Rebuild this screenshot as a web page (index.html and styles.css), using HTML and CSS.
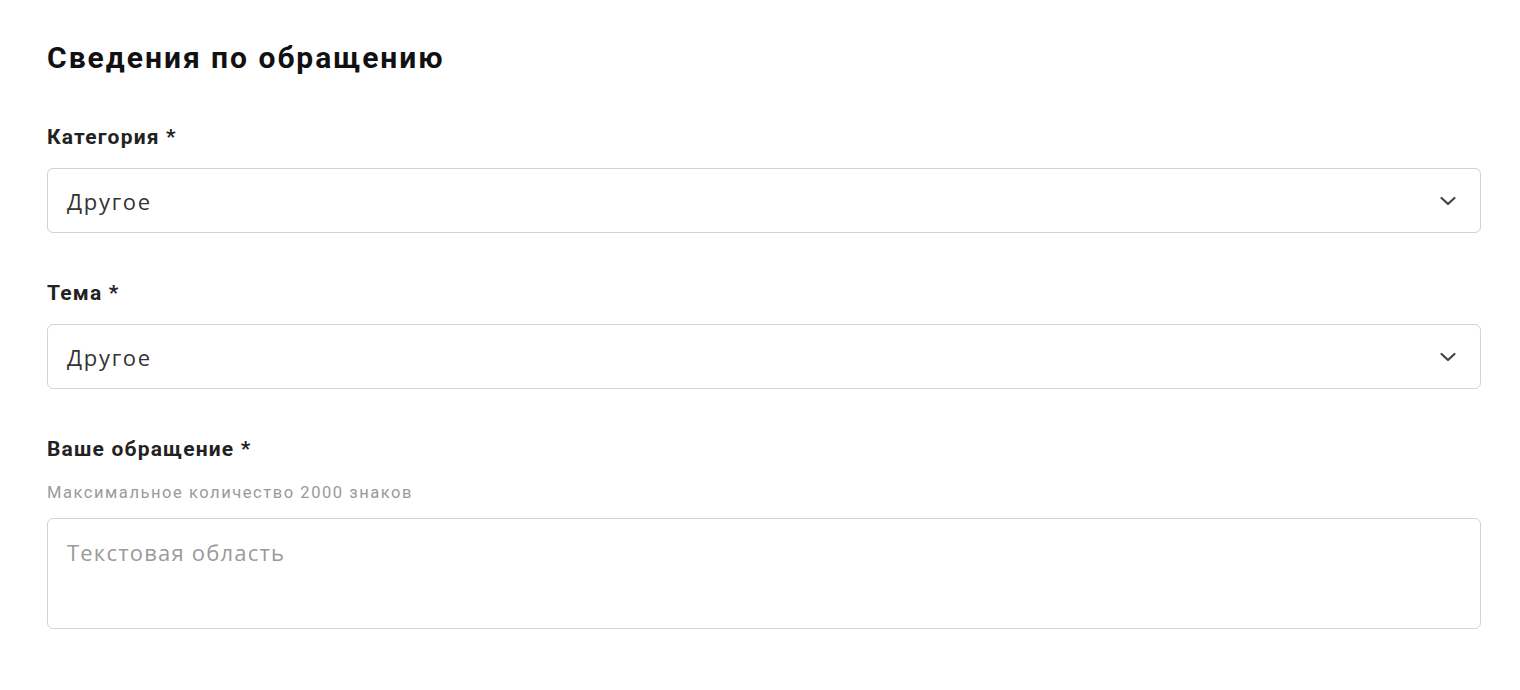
FILE: index.html
```html
<!DOCTYPE html>
<html lang="ru">
<head>
    <meta charset="UTF-8">
    <title>Сведения по обращению</title>
    <link rel="stylesheet" href="styles.css">
</head>
<body>
    <form class="request-form">
        <h2 class="form-title">Сведения по обращению</h2>

        <div class="field">
            <label class="field-label">Категория *</label>
            <div class="select">
                <span class="select-value">Другое</span>
                <svg class="chevron" width="20" height="20" viewBox="0 0 20 20"><path d="M3.5 7l6.5 6 6.5-6" fill="none" stroke="#444" stroke-width="2.2" stroke-linecap="round" stroke-linejoin="round"/></svg>
            </div>
        </div>

        <div class="field">
            <label class="field-label">Тема *</label>
            <div class="select">
                <span class="select-value">Другое</span>
                <svg class="chevron" width="20" height="20" viewBox="0 0 20 20"><path d="M3.5 7l6.5 6 6.5-6" fill="none" stroke="#444" stroke-width="2.2" stroke-linecap="round" stroke-linejoin="round"/></svg>
            </div>
        </div>

        <div class="field">
            <label class="field-label">Ваше обращение *</label>
            <div class="field-hint">Максимальное количество 2000 знаков</div>
            <textarea class="textarea" placeholder="Текстовая область"></textarea>
        </div>
    </form>
</body>
</html>
```

FILE: styles.css
```css
* {
    margin: 0;
    padding: 0;
    box-sizing: border-box;
}

body {
    background: #ffffff;
    font-family: 'Roboto', 'Liberation Sans', sans-serif;
    color: #1a1a1a;
}

.request-form {
    padding: 40px 39px 0 47px;
    display: flex;
    flex-direction: column;
}

.form-title {
    font-size: 30px;
    font-weight: 700;
    letter-spacing: 2px;
    color: #111111;
    line-height: 36px;
    margin-bottom: 48px;
}

.field {
    display: flex;
    flex-direction: column;
    margin-bottom: 47px;
}

.field-label {
    font-size: 21px;
    font-weight: 700;
    letter-spacing: 1.2px;
    line-height: 26px;
    color: #222222;
    margin-bottom: 18px;
}

.field-label + .field-hint {
    margin-top: 3px;
}

.field-hint {
    font-size: 16.5px;
    letter-spacing: 1.55px;
    color: #9a9a9a;
    line-height: 20px;
    margin-top: -2px;
    margin-bottom: 15px;
}

.select {
    display: flex;
    align-items: center;
    justify-content: space-between;
    height: 65px;
    padding: 0 22px 0 19px;
    border: 1px solid #d2d2d2;
    border-radius: 6px;
}

.select-value {
    font-family: 'Open Sans', 'Liberation Sans', sans-serif;
    font-size: 22px;
    letter-spacing: 1.7px;
    color: #333333;
}

.textarea {
    height: 111px;
    padding: 18px 19px;
    border: 1px solid #d2d2d2;
    border-radius: 6px;
    font-family: 'Open Sans', 'Liberation Sans', sans-serif;
    font-size: 22px;
    letter-spacing: 1.2px;
    resize: none;
    outline: none;
}

.textarea::placeholder {
    color: #9a9a9a;
}
```
